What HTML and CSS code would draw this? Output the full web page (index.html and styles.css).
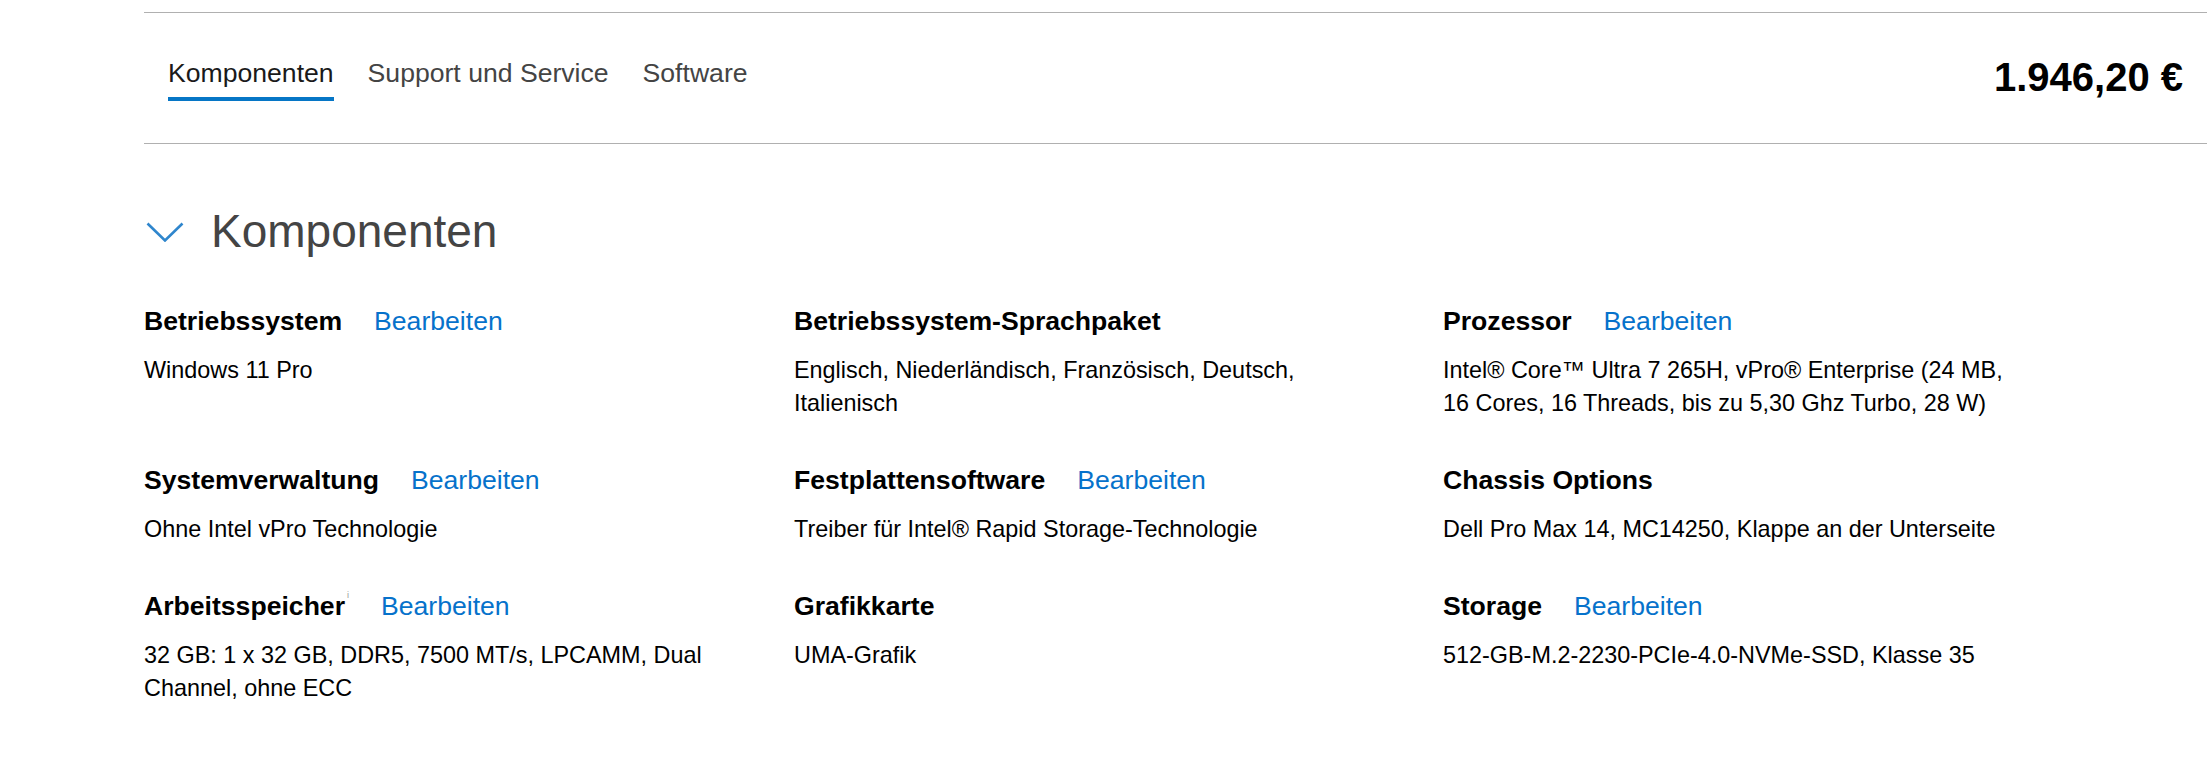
FILE: index.html
```html
<!DOCTYPE html>
<html lang="de">
<head>
<meta charset="utf-8">
<title>Komponenten</title>
<link rel="stylesheet" href="styles.css">
</head>
<body>
<div class="page">
  <div class="topbar">
    <nav class="tabs">
      <a class="tab active">Komponenten</a>
      <a class="tab">Support und Service</a>
      <a class="tab">Software</a>
    </nav>
    <div class="price">1.946,20 €</div>
  </div>

  <h2 class="section-title">
    <svg class="chevron" width="38" height="20" viewBox="0 0 38 20"><path d="M1.5 1.5 L19 18.5 L36.5 1.5" fill="none" stroke="#2f86cd" stroke-width="2.6"/></svg>
    <span>Komponenten</span>
  </h2>

  <div class="grid">
    <div class="item">
      <div class="label-row"><span class="label">Betriebssystem</span><a class="edit">Bearbeiten</a></div>
      <p class="value">Windows 11 Pro</p>
    </div>
    <div class="item">
      <div class="label-row"><span class="label">Betriebssystem-Sprachpaket</span></div>
      <p class="value">Englisch, Niederländisch, Französisch, Deutsch, Italienisch</p>
    </div>
    <div class="item">
      <div class="label-row"><span class="label">Prozessor</span><a class="edit">Bearbeiten</a></div>
      <p class="value">Intel® Core™ Ultra 7 265H, vPro® Enterprise (24 MB, 16 Cores, 16 Threads, bis zu 5,30 Ghz Turbo, 28 W)</p>
    </div>

    <div class="item">
      <div class="label-row"><span class="label">Systemverwaltung</span><a class="edit">Bearbeiten</a></div>
      <p class="value">Ohne Intel vPro Technologie</p>
    </div>
    <div class="item">
      <div class="label-row"><span class="label">Festplattensoftware</span><a class="edit">Bearbeiten</a></div>
      <p class="value">Treiber für Intel® Rapid Storage-Technologie</p>
    </div>
    <div class="item">
      <div class="label-row"><span class="label">Chassis Options</span></div>
      <p class="value">Dell Pro Max 14, MC14250, Klappe an der Unterseite</p>
    </div>

    <div class="item">
      <div class="label-row"><span class="label">Arbeitsspeicher<sup class="info">i</sup></span><a class="edit">Bearbeiten</a></div>
      <p class="value">32 GB: 1 x 32 GB, DDR5, 7500 MT/s, LPCAMM, Dual Channel, ohne ECC</p>
    </div>
    <div class="item">
      <div class="label-row"><span class="label">Grafikkarte</span></div>
      <p class="value">UMA-Grafik</p>
    </div>
    <div class="item">
      <div class="label-row"><span class="label">Storage</span><a class="edit">Bearbeiten</a></div>
      <p class="value">512-GB-M.2-2230-PCIe-4.0-NVMe-SSD, Klasse 35</p>
    </div>
  </div>
</div>
</body>
</html>
```

FILE: styles.css
```css
html, body {
  margin: 0;
  padding: 0;
  background: #ffffff;
}

body {
  font-family: "Liberation Sans", Arial, sans-serif;
  color: #000;
}

.page {
  padding-left: 144px;
}

.topbar {
  margin-top: 12px;
  height: 130px;
  border-top: 1px solid #b0b0b0;
  border-bottom: 1px solid #b0b0b0;
  display: flex;
  justify-content: space-between;
  align-items: flex-start;
}

.tabs {
  display: flex;
  gap: 34px;
  padding-left: 24px;
  padding-top: 45px;
}

.tab {
  font-size: 26.6px;
  line-height: 30px;
  color: #444;
  padding-bottom: 9px;
  border-bottom: 4px solid transparent;
  cursor: pointer;
}

.tab.active {
  color: #1a1a1a;
  border-bottom-color: #0676c6;
}

.price {
  font-weight: 700;
  font-size: 40px;
  line-height: 46px;
  margin-top: 41px;
  margin-right: 24px;
  color: #000;
}

.section-title {
  margin: 60px 0 45px 2px;
  display: flex;
  align-items: center;
  gap: 27px;
  font-weight: 400;
  font-size: 46px;
  line-height: 54px;
  color: #444;
}

.chevron {
  display: block;
  margin-top: 2px;
}

.grid {
  display: grid;
  grid-template-columns: 650px 649px 1fr;
  row-gap: 42px;
}

.item {
  max-width: 570px;
}

.label-row {
  display: flex;
  align-items: baseline;
  line-height: 36px;
  font-size: 26.6px;
  margin-bottom: 15px;
}

.label {
  font-weight: 700;
  color: #000;
}

.info {
  font-size: 9px;
  font-weight: 400;
  color: #9a9a9a;
  vertical-align: top;
  line-height: 1;
  position: relative;
  top: 3px;
  margin-left: 2px;
}

.edit {
  margin-left: 32px;
  font-size: 26.6px;
  color: #0672cb;
  cursor: pointer;
}

.value {
  margin: 0;
  font-size: 23.4px;
  line-height: 33px;
  color: #000;
}
```
